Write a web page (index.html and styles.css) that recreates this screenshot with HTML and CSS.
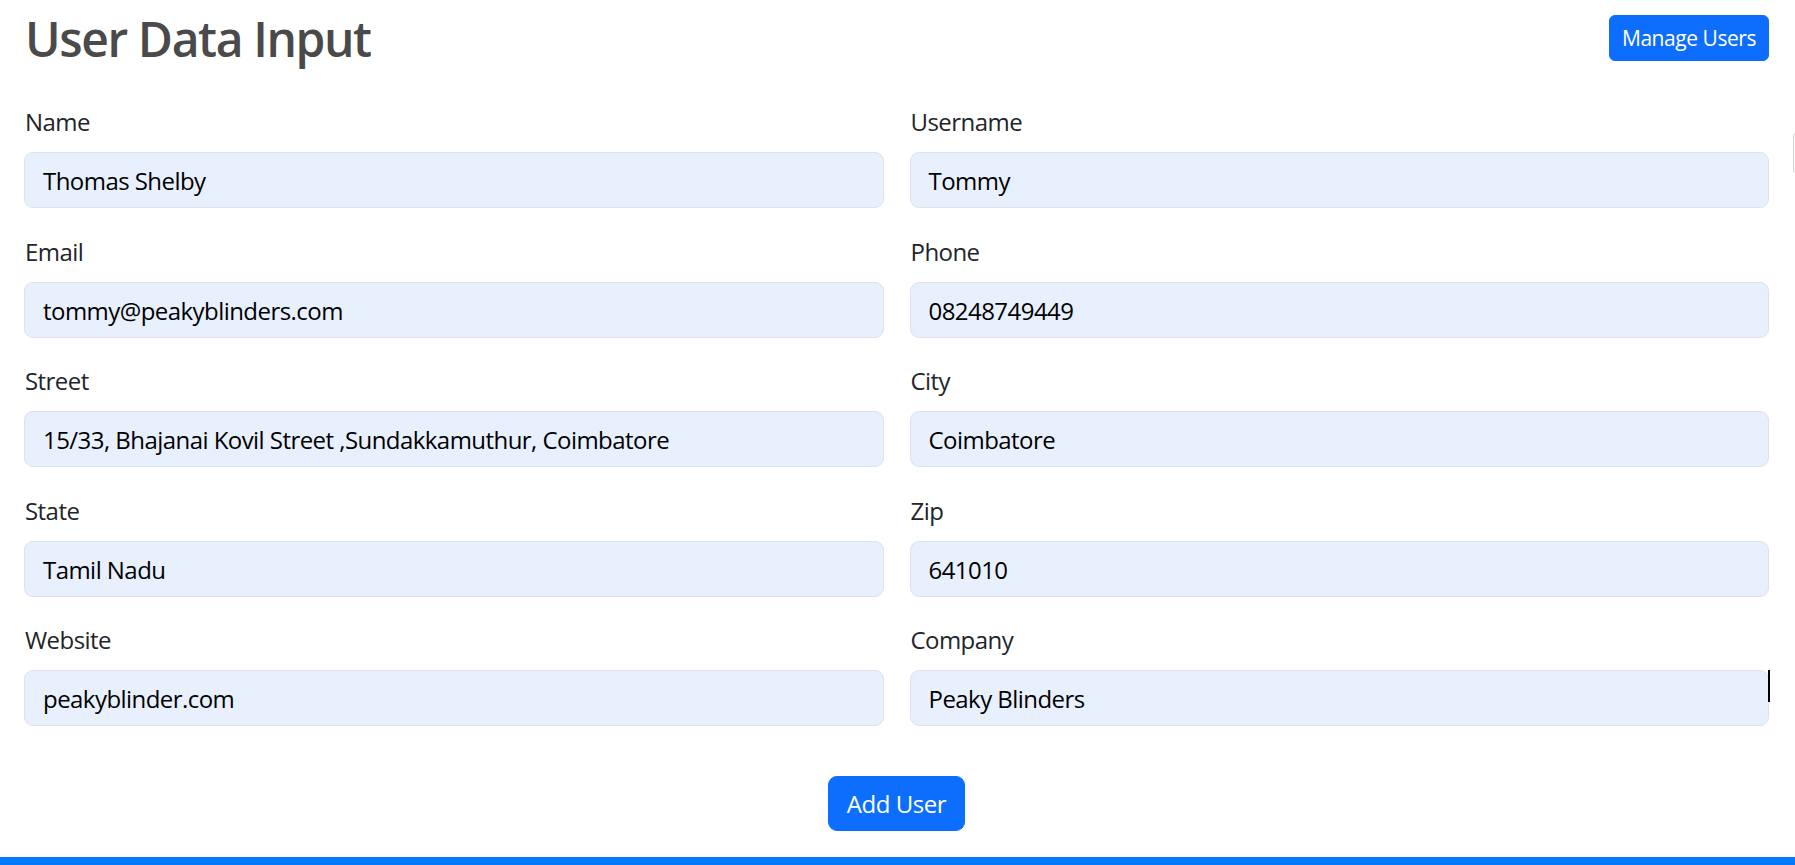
FILE: index.html
```html
<!DOCTYPE html>
<html lang="en">
<head>
<meta charset="utf-8">
<title>User Data Input</title>
<link rel="stylesheet" href="styles.css">
</head>
<body>
<div class="page">
  <header class="topbar">
    <h1 class="title">User Data Input</h1>
    <button class="btn btn-sm" type="button">Manage Users</button>
  </header>
  <form class="user-form">
    <div class="fields">
      <div class="field">
        <label class="label">Name</label>
        <div class="input">Thomas Shelby</div>
      </div>
      <div class="field">
        <label class="label">Username</label>
        <div class="input">Tommy</div>
      </div>
      <div class="field">
        <label class="label">Email</label>
        <div class="input">tommy@peakyblinders.com</div>
      </div>
      <div class="field">
        <label class="label">Phone</label>
        <div class="input">08248749449</div>
      </div>
      <div class="field">
        <label class="label">Street</label>
        <div class="input">15/33, Bhajanai Kovil Street ,Sundakkamuthur, Coimbatore</div>
      </div>
      <div class="field">
        <label class="label">City</label>
        <div class="input">Coimbatore</div>
      </div>
      <div class="field">
        <label class="label">State</label>
        <div class="input">Tamil Nadu</div>
      </div>
      <div class="field">
        <label class="label">Zip</label>
        <div class="input">641010</div>
      </div>
      <div class="field">
        <label class="label">Website</label>
        <div class="input">peakyblinder.com</div>
      </div>
      <div class="field field-caret">
        <label class="label">Company</label>
        <div class="input">Peaky Blinders</div>
      </div>
    </div>
    <div class="actions">
      <button class="btn btn-lg" type="button">Add User</button>
    </div>
  </form>
</div>
<div class="edge-tab"></div>
<div class="footer-bar"></div>
</body>
</html>
```
FILE: styles.css
```css
html, body {
  margin: 0;
  padding: 0;
  overflow: hidden;
  height: 865px;
}
body {
  font-family: "Open Sans", "Noto Sans", sans-serif;
  font-size: 24px;
  line-height: 36px;
  letter-spacing: -0.55px;
  color: #212529;
  background: #ffffff;
  position: relative;
}
.page {
  padding: 8px 26px 0 24px;
  height: 857px;
  box-sizing: border-box;
}
.topbar {
  display: flex;
  justify-content: space-between;
  align-items: flex-start;
  height: 62px;
}
.title {
  margin: 2px 0 0 1px;
  font-size: 48px;
  line-height: 58px;
  font-weight: 600;
  letter-spacing: -1.4px;
  color: #4a4a4a;
}
.btn {
  font-family: inherit;
  letter-spacing: -0.45px;
  background: #0d6efd;
  color: #ffffff;
  border: 1px solid #0d6efd;
  cursor: pointer;
}
.btn-sm {
  margin-top: 7px;
  font-size: 21px;
  line-height: 31px;
  padding: 6px 12px;
  border-radius: 6px;
  height: 46px;
}
.btn-lg {
  font-size: 24px;
  line-height: 36px;
  padding: 8px 18px;
  border-radius: 9px;
  height: 55px;
}
.user-form {
  margin-top: 34px;
}
.fields {
  display: grid;
  grid-template-columns: 1fr 1fr;
  column-gap: 26px;
  row-gap: 25.5px;
}
.field {
  display: flex;
  flex-direction: column;
}
.label {
  display: block;
  margin-bottom: 12px;
  height: 36px;
  padding-left: 1px;
}
.input {
  box-sizing: border-box;
  height: 56px;
  padding: 10px 17px 8px 18px;
  border: 1px solid #dee2e6;
  border-radius: 9px;
  background: #e8f0fe;
  color: #000000;
  white-space: nowrap;
  overflow: hidden;
}
.field-caret {
  position: relative;
}
.field-caret::after {
  content: "";
  position: absolute;
  right: -1px;
  top: 48px;
  width: 2px;
  height: 32px;
  background: #000000;
}
.actions {
  display: flex;
  justify-content: center;
  margin-top: 50px;
}
.edge-tab {
  position: absolute;
  left: 1793px;
  top: 131px;
  width: 12px;
  height: 44px;
  border: 1px solid #cfd2d6;
  border-radius: 6px;
  box-sizing: border-box;
}
.footer-bar {
  height: 8px;
  background: #007bff;
}
```
